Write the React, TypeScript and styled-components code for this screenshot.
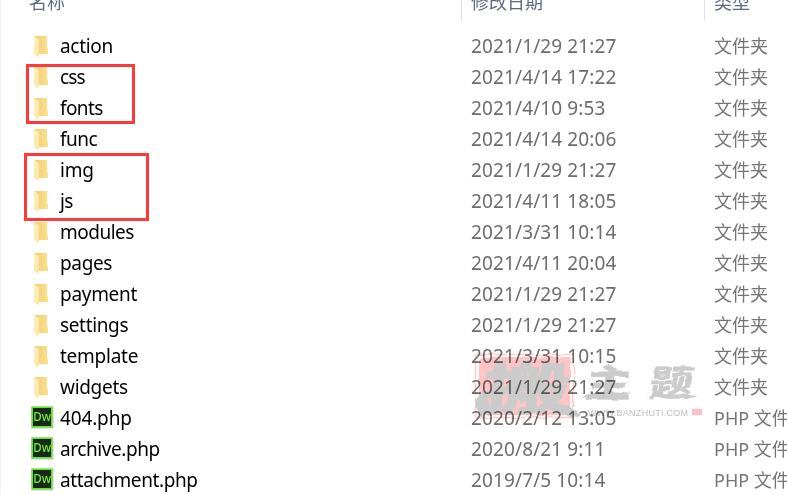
import React from "react";
import styled, { createGlobalStyle } from "styled-components";

const Global = createGlobalStyle`
  html, body { margin: 0; background: #fff; overflow: hidden; }
  * { box-sizing: border-box; }
`;

const Pane = styled.main`
  position: relative;
  width: 787px;
  height: 495px;
  overflow: hidden;
  background: #fff;
  border-left: 1px solid #f3f3f3;
  font-family: "Noto Sans", "Noto Sans CJK SC", sans-serif;
  font-size: 19px;
  color: #6d6d6d;
  white-space: nowrap;
`;

const columns = "460px 243px 1fr";

const Header = styled.header`
  display: grid;
  grid-template-columns: ${columns};
  height: 31px;
  color: #5a6b82;
  font-family: "Noto Sans CJK SC", sans-serif;
  font-size: 18px;
`;

const HeaderCell = styled.div<{ $divided?: boolean }>`
  height: 21px;
  padding-left: ${(p) => (p.$divided ? "9px" : "28px")};
  border-left: ${(p) => (p.$divided ? "1px solid #e2e2e2" : "0")};
  line-height: 26px;

  span {
    display: block;
    margin-top: -12px;
  }
`;

const Row = styled.div`
  display: grid;
  grid-template-columns: ${columns};
  height: 31px;
  line-height: 31px;
`;

const NameCell = styled.div`
  display: grid;
  grid-template-columns: 29px 1fr;
  padding-left: 30px;
  color: #000;
`;

const IconSlot = styled.span`
  display: block;
  height: 31px;

  svg {
    display: block;
  }
`;

const Label = styled.span<{ $spacing: number }>`
  letter-spacing: ${(p) => p.$spacing}px;
`;

const DateCell = styled.div`
  padding-left: 10px;
  letter-spacing: 0.12px;
`;

const TypeCell = styled.div`
  padding-left: 10px;
  font-size: 18px;
  color: #757575;
`;

const Mark = styled.div<{ $x: number; $y: number; $w: number; $h: number }>`
  position: absolute;
  left: ${(p) => p.$x - 1}px;
  top: ${(p) => p.$y}px;
  width: ${(p) => p.$w}px;
  height: ${(p) => p.$h}px;
  border: 3px solid #fc3a3a;
`;

const Watermark = styled.svg`
  position: absolute;
  left: 469px;
  top: 345px;
  mix-blend-mode: multiply;
  pointer-events: none;
`;

const FolderIcon = () => (
  <svg width="29" height="31" viewBox="0 0 29 31">
    <defs>
      <linearGradient id="folderBack" x1="0" x2="1" y1="0" y2="0">
        <stop offset="0.2" stopColor="#f1d279" />
        <stop offset="1" stopColor="#fde08c" />
      </linearGradient>
      <linearGradient id="folderFlap" x1="0" x2="1" y1="0" y2="1">
        <stop offset="0" stopColor="#ffefbf" />
        <stop offset="1" stopColor="#fde6a6" />
      </linearGradient>
    </defs>
    <path d="M3 5H16V17L17 18V23H7L3 20Z" fill="url(#folderBack)" />
    <path d="M3 5L8 8.5V25L7 26L3 23Z" fill="url(#folderFlap)" />
  </svg>
);

const DwLabel = styled.text`
  font: 500 13px "Noto Sans", sans-serif;
  fill: #76ec2c;
`;

const DreamweaverIcon = () => (
  <svg width="29" height="31" viewBox="0 0 29 31">
    <rect x="0" y="3.5" width="22.5" height="22" rx="1" fill="#c9c9cf" />
    <rect x="1.25" y="4.25" width="19.5" height="19.5" fill="#18281c" stroke="#62e816" strokeWidth="1.5" />
    <DwLabel x="2.2" y="18" textLength="17.8" lengthAdjust="spacingAndGlyphs">Dw</DwLabel>
  </svg>
);

const Brush = styled.text`
  font-family: "Noto Sans CJK SC", sans-serif;
  font-weight: 700;
  fill: #cbcbcb;
`;

const Address = styled.text`
  font: 9px "Liberation Sans", sans-serif;
  fill: #bdbdbd;
`;

type Entry = { name: string; date: string; php?: boolean; spacing?: number };

const entries: Entry[] = [
  { name: "action", date: "2021/1/29 21:27", spacing: -0.3 },
  { name: "css", date: "2021/4/14 17:22", spacing: -0.8 },
  { name: "fonts", date: "2021/4/10 9:53", spacing: -0.6 },
  { name: "func", date: "2021/4/14 20:06", spacing: -0.5 },
  { name: "img", date: "2021/1/29 21:27", spacing: -0.2 },
  { name: "js", date: "2021/4/11 18:05", spacing: -0.6 },
  { name: "modules", date: "2021/3/31 10:14", spacing: -0.5 },
  { name: "pages", date: "2021/4/11 20:04", spacing: -0.35 },
  { name: "payment", date: "2021/1/29 21:27", spacing: -0.3 },
  { name: "settings", date: "2021/1/29 21:27", spacing: -0.35 },
  { name: "template", date: "2021/3/31 10:15", spacing: -0.25 },
  { name: "widgets", date: "2021/1/29 21:27", spacing: -0.3 },
  { name: "404.php", date: "2020/2/12 13:05", php: true, spacing: -0.15 },
  { name: "archive.php", date: "2020/8/21 9:11", php: true, spacing: -0.42 },
  { name: "attachment.php", date: "2019/7/5 10:14", php: true, spacing: -0.4 },
];

export default function App() {
  return (
    <>
      <Global />
      <Pane>
        <Header>
          <HeaderCell><span>名称</span></HeaderCell>
          <HeaderCell $divided><span>修改日期</span></HeaderCell>
          <HeaderCell $divided><span>类型</span></HeaderCell>
        </Header>
        {entries.map((entry) => (
          <Row key={entry.name}>
            <NameCell>
              <IconSlot>{entry.php ? <DreamweaverIcon /> : <FolderIcon />}</IconSlot>
              <Label $spacing={entry.spacing ?? 0}>{entry.name}</Label>
            </NameCell>
            <DateCell>{entry.date}</DateCell>
            <TypeCell>{entry.php ? "PHP 文件" : "文件夹"}</TypeCell>
          </Row>
        ))}
        <Watermark width="240" height="80" viewBox="470 345 240 80">
          <defs>
            <filter id="rough" x="-5%" y="-5%" width="110%" height="110%" colorInterpolationFilters="sRGB">
              <feTurbulence type="fractalNoise" baseFrequency="0.09" numOctaves="2" seed="4" />
              <feDisplacementMap in="SourceGraphic" scale="4" xChannelSelector="R" yChannelSelector="G" />
            </filter>
          </defs>
          <g filter="url(#rough)">
            <rect x="475.5" y="354.5" width="98" height="63" rx="2" fill="none" stroke="#ffc9c9" strokeWidth="1.5" strokeDasharray="38 1 17 2" />
            <rect x="479" y="357" width="91" height="58" rx="3" fill="#ffc5c5" />
            <path d="M474 402L484 390L492 410L481 417ZM554 402L568 405L581 414L572 418L557 411Z" fill="#cbcbcb" />
            <Brush fontSize="56" strokeWidth="1.5" stroke="#cbcbcb" transform="translate(482 409) skewX(-5) scale(1.55 1)">搬</Brush>
            <Brush fontSize="38" strokeWidth="0.6" stroke="#cbcbcb" transform="translate(584 397) skewX(-8) scale(1.2 1)">主</Brush>
            <Brush fontSize="36" strokeWidth="0.6" stroke="#cbcbcb" transform="translate(648 396) skewX(-8) scale(1.2 1)">题</Brush>
            <path d="M581 398Q596 388 631 393L622 396Q602 394 581 398ZM645 397Q660 392 699 396L687 399Q664 396 645 397Z" fill="#cbcbcb" />
          </g>
          <Address x="588" y="416" textLength="100">WWW.BANZHUTI.COM</Address>
          <rect x="692" y="409" width="10" height="6" fill="#ffbfc1" />
        </Watermark>
        <Mark $x={26} $y={64} $w={109} $h={60} />
        <Mark $x={24} $y={153} $w={125} $h={68} />
      </Pane>
    </>
  );
}
